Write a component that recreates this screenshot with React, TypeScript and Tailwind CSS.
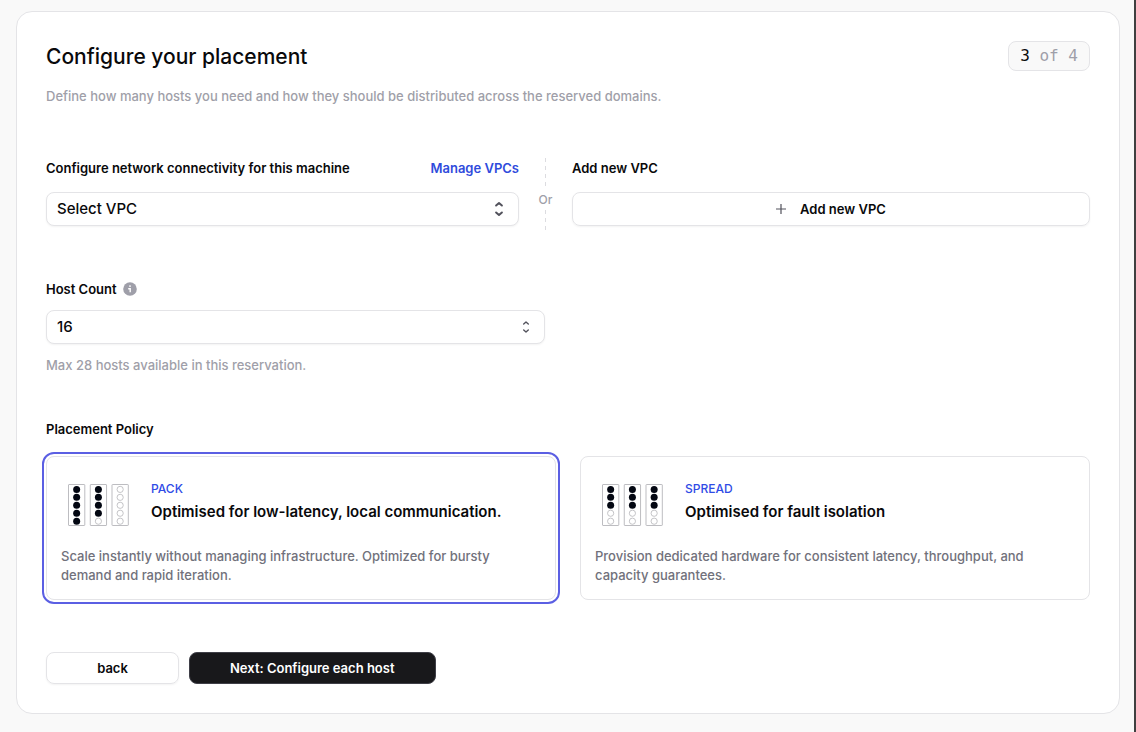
import { useId, useState } from 'react';
import type { ReactElement, ReactNode } from 'react';

type Policy = 'pack' | 'spread';

interface PolicyOption {
  value: Policy;
  label: string;
  title: string;
  description: string;
  // number of occupied hosts in each rack, out of SLOTS_PER_RACK
  racks: number[];
}

const SLOTS_PER_RACK = 5;
const MAX_HOSTS = 28;

const POLICIES: PolicyOption[] = [
  {
    value: 'pack',
    label: 'PACK',
    title: 'Optimised for low-latency, local communication.',
    description:
      'Scale instantly without managing infrastructure. Optimized for bursty demand and rapid iteration.',
    racks: [5, 4, 0],
  },
  {
    value: 'spread',
    label: 'SPREAD',
    title: 'Optimised for fault isolation',
    description:
      'Provision dedicated hardware for consistent latency, throughput, and capacity guarantees.',
    racks: [3, 3, 3],
  },
];

function RackIcon({ racks }: { racks: number[] }): ReactElement {
  return (
    <svg width="61" height="42" viewBox="0 0 61 42" fill="none" className="shrink-0" aria-hidden="true">
      {racks.map((used, rack) => {
        const x = rack * 21.75 + 0.5;
        return (
          <g key={rack}>
            <rect x={x} y="0.5" width="16.3" height="41" rx="0.5" stroke="#bdbdc1" />
            {Array.from({ length: SLOTS_PER_RACK }, (_, slot) => (
              <circle
                key={slot}
                cx={x + 8.15}
                cy={5.4 + slot * 7.95}
                r={slot < used ? 3.5 : 3.1}
                fill={slot < used ? '#030712' : 'none'}
                stroke={slot < used ? 'none' : '#bdbdc1'}
                strokeWidth="0.9"
              />
            ))}
          </g>
        );
      })}
    </svg>
  );
}

function InfoIcon(): ReactElement {
  return (
    <svg width="14" height="14" viewBox="0 0 14 14" aria-hidden="true">
      <circle cx="7" cy="7" r="6.8" fill="#9f9fa9" />
      <circle cx="7" cy="4.1" r="0.9" fill="#fff" />
      <path d="M5.2 6.8h2v3.5" fill="none" stroke="#fff" strokeWidth="1.4" />
    </svg>
  );
}

function ChevronsIcon({ small = false }: { small?: boolean }): ReactElement {
  return (
    <svg
      width={small ? 10 : 12}
      height={small ? 14 : 16}
      viewBox={small ? '0 0 10 14' : '0 0 12 16'}
      fill="none"
      stroke="#52525c"
      strokeWidth={small ? 1.4 : 2}
      strokeLinecap="round"
      strokeLinejoin="round"
      aria-hidden="true"
    >
      <path d={small ? 'M2.7 4 5 2l2.3 2M2.7 10 5 12l2.3-2' : 'M3.1 4.5 6 2l2.9 2.5M3.1 11.5 6 14l2.9-2.5'} />
    </svg>
  );
}

interface SelectProps {
  id: string;
  value: string;
  onChange: (value: string) => void;
  smallIcon?: boolean;
  children: ReactNode;
}

function Select({ id, value, onChange, smallIcon, children }: SelectProps): ReactElement {
  return (
    <div className="relative">
      <select
        id={id}
        value={value}
        onChange={(e) => onChange(e.target.value)}
        className="block h-[34px] w-full appearance-none rounded-lg border border-zinc-200 bg-white px-[10px] text-[15px] font-medium text-zinc-950 shadow-xs"
      >
        {children}
      </select>
      <span className="pointer-events-none absolute inset-y-0 right-[14px] flex items-center">
        <ChevronsIcon small={smallIcon} />
      </span>
    </div>
  );
}

function DashedRule({ className }: { className: string }): ReactElement {
  return (
    <span
      className={`w-px bg-[repeating-linear-gradient(#dcdce0_0_4px,transparent_4px_8px)] ${className}`}
    />
  );
}

export default function App(): ReactElement {
  const id = useId();
  const [vpc, setVpc] = useState('');
  const [hostCount, setHostCount] = useState('16');
  const [policy, setPolicy] = useState<Policy>('pack');

  return (
    <div className="min-h-screen border-r-2 border-[#404040] bg-[#f9f9f9] pt-[11px] pr-[14px] pb-[19px] pl-4 font-['Inter',sans-serif] text-[13px] leading-5 text-zinc-950">
      <main className="rounded-2xl border border-zinc-200 bg-white p-[29px]">
        <header className="flex items-start justify-between">
          <div>
            <h1 className="text-[21px] leading-8 font-medium">Configure your placement</h1>
            <p className="mt-[13px] font-medium text-zinc-400">
              Define how many hosts you need and how they should be distributed across the reserved domains.
            </p>
          </div>
          <div className="flex h-[30px] items-center rounded-lg border border-zinc-200 bg-[#f9f9f9] px-[11px] font-['DejaVu_Sans_Mono',monospace] text-base whitespace-pre text-zinc-400">
            <span className="text-zinc-950">3</span> of 4
          </div>
        </header>

        {/* Network */}
        <section className="mt-[52px] flex">
          <div className="flex-[473] pb-2">
            <div className="flex justify-between font-semibold">
              <label htmlFor={`${id}-vpc`}>Configure network connectivity for this machine</label>
              <a href="#vpcs" className="text-[#2f4bdc]">
                Manage VPCs
              </a>
            </div>
            <div className="mt-[14px]">
              <Select id={`${id}-vpc`} value={vpc} onChange={setVpc}>
                <option value="">Select VPC</option>
              </Select>
            </div>
          </div>

          <div className="flex w-[53px] flex-col items-center text-xs leading-5 text-zinc-400">
            <DashedRule className="h-8" />
            <span className="font-medium">Or</span>
            <DashedRule className="flex-1" />
          </div>

          <div className="flex-[518] pb-2">
            <h2 className="font-semibold">Add new VPC</h2>
            <button
              type="button"
              className="mt-[14px] flex h-[34px] w-full items-center justify-center gap-[14px] rounded-lg border border-zinc-200 font-semibold shadow-xs"
            >
              <svg width="10" height="10" viewBox="0 0 10 10" stroke="#52525c" strokeWidth="1.2" aria-hidden="true">
                <path d="M5 0v10M0 5h10" />
              </svg>
              Add new VPC
            </button>
          </div>
        </section>

        {/* Host count */}
        <section className="mt-[45px] max-w-[499px]">
          <div className="flex items-center gap-1.5">
            <label htmlFor={`${id}-hosts`} className="font-semibold">
              Host Count
            </label>
            <InfoIcon />
          </div>
          <div className="mt-[11px]">
            <Select id={`${id}-hosts`} value={hostCount} onChange={setHostCount} smallIcon>
              {Array.from({ length: MAX_HOSTS }, (_, i) => (
                <option key={i} value={i + 1}>
                  {i + 1}
                </option>
              ))}
            </Select>
          </div>
          <p className="mt-[11px] font-medium text-zinc-400">
            Max {MAX_HOSTS} hosts available in this reservation.
          </p>
        </section>

        {/* Placement policy */}
        <fieldset className="mt-11">
          <legend className="font-semibold">Placement Policy</legend>
          <div className="mt-[17px] grid grid-cols-2 gap-6">
            {POLICIES.map((option) => (
              <label
                key={option.value}
                className={`relative block rounded-lg border border-zinc-200 px-[14px] pt-[23px] pb-[14px] ${
                  policy === option.value ? 'outline-2 outline-offset-2 outline-[#5b5fe3]' : ''
                }`}
              >
                <input
                  type="radio"
                  name="policy"
                  value={option.value}
                  checked={policy === option.value}
                  onChange={() => setPolicy(option.value)}
                  className="sr-only"
                />
                <span className="flex items-end gap-[22px] pl-[7px]">
                  <RackIcon racks={option.racks} />
                  <span>
                    <span className="block text-xs leading-[18px] font-medium text-[#2f4be6]">
                      {option.label}
                    </span>
                    <span className="block text-[15px] leading-7 font-semibold">{option.title}</span>
                  </span>
                </span>
                <span className="mt-[21px] block pr-4 leading-[19px] font-medium text-zinc-500">
                  {option.description}
                </span>
              </label>
            ))}
          </div>
        </fieldset>

        {/* Navigation */}
        <div className="mt-[52px] flex gap-[10px] font-semibold">
          <button type="button" className="h-8 w-[133px] rounded-lg border border-zinc-200 shadow-xs">
            back
          </button>
          <button
            type="button"
            className="h-8 rounded-lg border border-zinc-700 bg-zinc-900 px-10 text-white"
          >
            Next: Configure each host
          </button>
        </div>
      </main>
    </div>
  );
}
